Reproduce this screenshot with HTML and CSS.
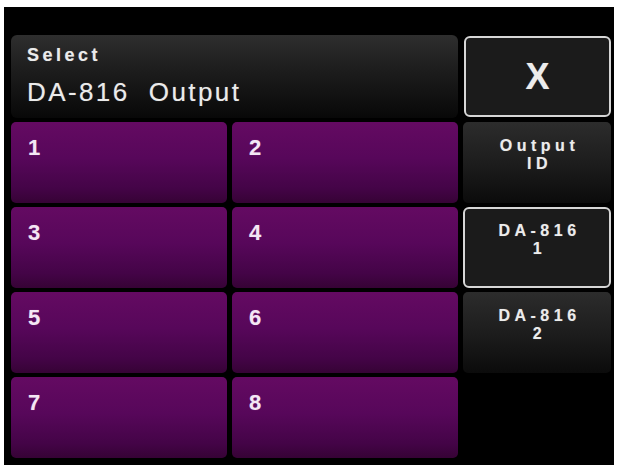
FILE: index.html
```html
<!DOCTYPE html>
<html lang="en">
<head>
<meta charset="utf-8">
<title>Select DA-816 Output</title>
<link rel="stylesheet" href="styles.css">
</head>
<body>
<div class="screen">
  <div class="panel">
    <div class="title-bar">
      <div class="title-small">Select</div>
      <div class="title-large">DA-816&nbsp; Output</div>
    </div>
    <button class="side-btn side-btn--outlined close-btn">X</button>

    <button class="out-btn">1</button>
    <button class="out-btn">2</button>
    <button class="side-btn">Output<br>ID</button>

    <button class="out-btn">3</button>
    <button class="out-btn">4</button>
    <button class="side-btn side-btn--outlined">DA-816<br>1</button>

    <button class="out-btn">5</button>
    <button class="out-btn">6</button>
    <button class="side-btn">DA-816<br>2</button>

    <button class="out-btn">7</button>
    <button class="out-btn">8</button>
    <div class="side-empty"></div>
  </div>
</div>
</body>
</html>
```

FILE: styles.css
```css
html, body {
  margin: 0;
  padding: 0;
  background: #ffffff;
}

.screen {
  margin: 7px 0 0 4px;
  width: 610px;
  height: 458px;
  background: #000000;
  overflow: hidden;
}

.panel {
  display: grid;
  grid-template-columns: 216px 226px 148px;
  grid-template-rows: 83px 81px 81px 81px 81px;
  column-gap: 5px;
  row-gap: 4px;
  padding: 28px 0 0 7px;
}

button {
  font: inherit;
  margin: 0;
  cursor: pointer;
}

.title-bar {
  grid-column: 1 / 3;
  border-radius: 6px;
  background: linear-gradient(to bottom, #2e2e2e 0%, #1c1c1c 45%, #080808 100%);
  padding: 10px 0 0 16px;
  color: #ebebeb;
  font-family: "Liberation Sans", Arial, sans-serif;
  text-shadow: 0 0 1px rgba(255, 255, 255, 0.35);
}

.title-small {
  font-size: 18px;
  font-weight: bold;
  letter-spacing: 3.5px;
  line-height: 20px;
}

.title-large {
  font-size: 26px;
  letter-spacing: 2.4px;
  line-height: 30px;
  margin-top: 12px;
}

.out-btn {
  border: none;
  border-radius: 5px;
  background: linear-gradient(to bottom, #640a62 0%, #57075a 45%, #440447 82%, #360335 100%);
  color: #f4e6f4;
  font-family: "Liberation Sans", Arial, sans-serif;
  font-size: 22px;
  font-weight: bold;
  line-height: 22px;
  text-align: left;
  padding: 15px 0 0 17px;
  display: flex;
  align-items: flex-start;
  text-shadow: 0 0 1px rgba(255, 230, 255, 0.35);
}

.side-btn {
  border: none;
  border-radius: 5px;
  background: linear-gradient(to bottom, #2c2c2c 0%, #1d1d1d 50%, #0b0b0b 100%);
  color: #ececec;
  font-family: "Liberation Sans", Arial, sans-serif;
  font-size: 16px;
  font-weight: bold;
  letter-spacing: 4.5px;
  line-height: 18px;
  text-align: center;
  padding: 0 0 16px 5px;
  text-shadow: 0 0 1px rgba(255, 255, 255, 0.35);
}

.side-btn--outlined {
  background: #1b1b1b;
  border: 2px solid #d6d6d6;
  border-radius: 6px;
}

.close-btn {
  font-size: 36px;
  letter-spacing: 0;
  padding: 0;
  margin: 1px 0 1px 1px;
}

.side-empty {
  background: transparent;
}
```
